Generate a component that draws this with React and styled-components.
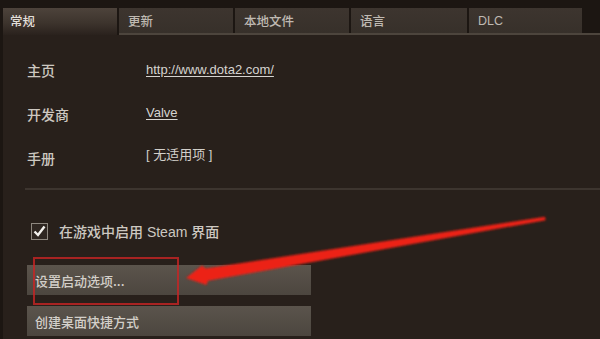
import React from 'react';
import styled, {createGlobalStyle} from 'styled-components';

const Global = createGlobalStyle`
    html, body {
        margin: 0;
        padding: 0;
        background: #1b1512;
    }
    body {
        font-family: "Liberation Sans", "Noto Sans CJK SC", sans-serif;
    }
`

const Page = styled.div`
    position: relative;
    width: 600px;
    height: 339px;
    overflow: hidden;
    background: #1c1612;
    padding: 8px 0 0 3px;
    box-sizing: border-box;
    display: flex;
    flex-direction: column;
`

const TabBar = styled.div`
    display: flex;
    height: 27px;
    flex-shrink: 0;
`

const TabSlot = styled.div`
    width: ${p => p.$width}px;
    padding-right: 2px;
    box-sizing: border-box;
    border-bottom: ${p => p.$active ? 'none' : '2px solid #4d453d'};
    display: flex;
`

const TabFace = styled.div`
    flex: 1;
    display: flex;
    align-items: center;
    padding-left: ${p => p.$active ? 7 : 9}px;
    padding-bottom: ${p => p.$active ? 3 : 0}px;
    font-size: 12.5px;
    font-weight: 500;
    color: ${p => p.$active ? '#e2ded8' : '#bfb9b2'};
    background: ${p => p.$active
        ? 'linear-gradient(to bottom, #4d433b 0%, #3d342d 55%, #2a221d 100%)'
        : 'linear-gradient(to bottom, #3d352f, #37302a)'};
`

const TabFiller = styled.div`
    flex: 1;
    border-bottom: 2px solid #4d453d;
`

const Panel = styled.div`
    flex: 1;
    background: #28201b;
    display: flex;
    flex-direction: column;
    padding-top: 13px;
`

const InfoGrid = styled.div`
    display: grid;
    grid-template-columns: 119px 1fr;
    grid-auto-rows: 44px;
    padding-left: 24px;
`

const Label = styled.div`
    display: flex;
    align-items: center;
    font-size: 14px;
    font-weight: 500;
    color: #cdc8c1;
    font-family: "Noto Sans CJK SC", sans-serif;
`

const Value = styled.div`
    display: flex;
    align-items: center;
    font-size: 13px;
    color: #d2cfca;
    margin-top: ${p => -p.$lift * 2}px;
    font-family: "Liberation Sans", "Noto Sans CJK SC", sans-serif;
`

const Link = styled.a`
    color: #d6d4d0;
    text-decoration: underline;
    text-underline-offset: 2px;
`

const Separator = styled.div`
    height: 2px;
    margin: 8px 0 0 22px;
    background: #3d352f;
`

const CheckRow = styled.label`
    display: flex;
    align-items: center;
    gap: 11px;
    margin: 32px 0 0 28px;
    height: 18px;
    font-size: 14px;
    font-weight: 500;
    color: #cdc8c1;
    font-family: "Liberation Sans", "Noto Sans CJK SC", sans-serif;
`

const Box = styled.span`
    width: 15px;
    height: 15px;
    border: 1px solid #8d877f;
    background: #2e2621;
    display: flex;
    align-items: center;
    justify-content: center;
`

const Buttons = styled.div`
    display: flex;
    flex-direction: column;
    gap: 11px;
    margin: 25px 0 0 24px;
    width: 284px;
`

const Button = styled.button`
    height: 30px;
    border: none;
    text-align: left;
    padding: 0 0 0 8px;
    font-size: 13px;
    font-weight: 500;
    color: #d3cfc9;
    font-family: "Noto Sans CJK SC", sans-serif;
    background: linear-gradient(to bottom, #5b544c, #4c463f);
`

const Highlight = styled.div`
    position: absolute;
    left: 33px;
    top: 257px;
    width: 142px;
    height: 44px;
    border: 2px solid rgba(200, 36, 36, 0.8);
`

const ArrowLayer = styled.svg`
    position: absolute;
    left: 0;
    top: 0;
    width: 600px;
    height: 339px;
    pointer-events: none;
`

const tabs = [
    {name: '常规', width: 116, active: true},
    {name: '更新', width: 116},
    {name: '本地文件', width: 116},
    {name: '语言', width: 118},
    {name: 'DLC', width: 115},
]

export default function App() {
    return (
        <Page>
            <Global />
            <TabBar>
                {tabs.map(t => (
                    <TabSlot key={t.name} $width={t.width} $active={t.active}>
                        <TabFace $active={t.active}>{t.name}</TabFace>
                    </TabSlot>
                ))}
                <TabFiller />
            </TabBar>
            <Panel>
                <InfoGrid>
                    <Label>主页</Label>
                    <Value $lift={1}><Link href="#">http://www.dota2.com/</Link></Value>
                    <Label>开发商</Label>
                    <Value $lift={2}><Link href="#">Valve</Link></Value>
                    <Label>手册</Label>
                    <Value $lift={5}>[ 无适用项 ]</Value>
                </InfoGrid>
                <Separator />
                <CheckRow>
                    <Box>
                        <svg width="13" height="12" viewBox="0 0 13 12">
                            <path d="M1.5 6.5 L5 10 L11.5 1.5" fill="none" stroke="#f4f2ee" strokeWidth="2.4" />
                        </svg>
                    </Box>
                    在游戏中启用 Steam 界面
                </CheckRow>
                <Buttons>
                    <Button>设置启动选项...</Button>
                    <Button>创建桌面快捷方式</Button>
                </Buttons>
            </Panel>
            <Highlight />
            <ArrowLayer viewBox="0 0 600 339">
                <defs>
                    <filter id="soft"><feGaussianBlur stdDeviation="1.2" /></filter>
                </defs>
                <polygon
                    filter="url(#soft)"
                    fill="#ec2118"
                    points="186,278 202,265.5 205.5,268.5 545,216.8 545.6,220.2 208,280.8 206.5,285"
                />
            </ArrowLayer>
        </Page>
    )
}
